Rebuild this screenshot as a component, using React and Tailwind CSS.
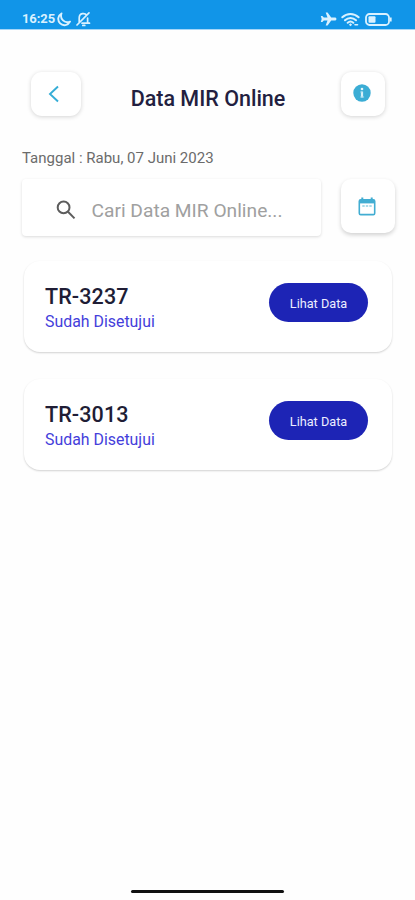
import React from "react";

const records = [
  { id: "TR-3237", status: "Sudah Disetujui" },
  { id: "TR-3013", status: "Sudah Disetujui" },
];

function StatusBar() {
  return (
    <header className="flex h-[30px] items-start justify-between border-b border-[#a5d6f8] bg-[#1195e8] pr-[23px] pl-[22px] text-[#d9f1ff]">
      <div className="flex h-[29px] items-center pt-[9px]">
        <span className="w-[34px] text-[13px] leading-4 font-bold tracking-[-0.1px] whitespace-nowrap">16:25</span>
        <svg className="h-[15px] w-[15px]" viewBox="0 0 15 15" fill="none" stroke="currentColor" strokeWidth="1.9" strokeLinejoin="round">
          <path d="M5.5 1.5A6.2 6.2 0 1 0 14 9.7 6.4 6.4 0 0 1 5.5 1.5Z" />
        </svg>
        <svg className="ml-[5px] h-[16px] w-[15px]" viewBox="0 0 15 16" fill="none" stroke="currentColor" strokeWidth="1.7" strokeLinecap="round">
          <path d="M3.2 11V7c0-5.6 6-5 7.3-3M11.6 7v5M6 12.2h7.5M6.8 14.4h2M1 14 13 1.8" />
        </svg>
      </div>
      <div className="flex h-[29px] items-center pt-[9px]">
        <svg className="h-[16px] w-[17px]" viewBox="0 0 17 16" fill="currentColor">
          <path d="M16.5 8c0-.9-.8-1.5-1.6-1.5h-3.7L7.6 1.5H5.7l1.8 5H3.8L2.4 4.9H.8L1.7 8 .8 11.1h1.6l1.4-1.6h3.7l-1.8 5h1.9l3.6-5h3.7c.8 0 1.6-.6 1.6-1.5Z" />
        </svg>
        <svg className="ml-[4px] h-[15px] w-[19px]" viewBox="0 0 19 15" fill="none" stroke="currentColor" strokeWidth="2" strokeLinecap="round">
          <path d="M1.3 5.3c4.7-4.4 11.6-4.4 16.3 0M4 8.2c3.2-3 7.8-3 11 0M6.7 10.8c1.6-1.4 4-1.4 5.6 0" />
          <path d="m9.5 11.2 1.6 1.6-1.6 1.5-1.6-1.5Z" fill="currentColor" stroke="none" />
          <path d="M14 12.8h2.5" strokeWidth="1.6" />
        </svg>
        <svg className="ml-[5px] h-[13px] w-[27px]" viewBox="0 0 27 13">
          <rect x="1" y="1" width="23" height="11" rx="3.5" fill="none" stroke="currentColor" strokeWidth="1.8" />
          <rect x="3.5" y="3.3" width="7" height="6.4" rx="1" fill="currentColor" />
          <path d="M25.8 4.5v4" stroke="currentColor" strokeWidth="1.7" />
        </svg>
      </div>
    </header>
  );
}

function RecordCard({ id, status }) {
  return (
    <article className="flex h-[91px] items-start justify-between rounded-[16px] bg-white pt-[22px] pr-[24px] pl-[21px] shadow-[0_1px_2px_rgba(0,0,0,0.18)]">
      <div className="pt-[1px]">
        <h2 className="text-[21.5px] leading-[25px] font-medium tracking-[0.1px] whitespace-nowrap text-[#201d35]">{id}</h2>
        <p className="text-[15.9px] leading-[26px] whitespace-nowrap text-[#453edb]">{status}</p>
      </div>
      <button className="h-[39px] w-[99px] rounded-full bg-[#1d24b5] pt-[2px] text-[12.7px] whitespace-nowrap text-[#eceeff]">
        Lihat Data
      </button>
    </article>
  );
}

export default function App() {
  return (
    <div className="flex h-[900px] w-[415px] flex-col overflow-hidden bg-[#fefefe] font-['Roboto',sans-serif]">
      <StatusBar />
      <main className="flex-1">
        <div className="mt-[41px] flex h-[45px] items-center justify-between pr-[30px] pl-[31px]">
          <button className="flex h-[44px] w-[50px] items-center rounded-[11px] bg-white pl-[17px] shadow-[0_1px_4px_rgba(0,0,0,0.17)]" aria-label="Kembali">
            <svg className="h-[18px] w-[12px]" viewBox="0 0 12 18" fill="none" stroke="#35add6" strokeWidth="1.9">
              <path d="M10 1.5 2 9l8 7.5" />
            </svg>
          </button>
          <h1 className="pt-[10px] pr-[6px] text-[21.5px] leading-6 font-medium whitespace-nowrap text-[#231f40]">Data MIR Online</h1>
          <button className="flex h-[44px] w-[44px] items-center justify-center rounded-[10px] bg-white pr-[2px] pb-[1px] shadow-[0_1px_4px_rgba(0,0,0,0.17)]" aria-label="Info">
            <svg className="h-[18px] w-[18px]" viewBox="0 0 18 18">
              <circle cx="9" cy="9" r="8.7" fill="#3badd5" />
              <path d="M9 7.5v6" fill="none" stroke="#d7f0f8" strokeWidth="2.2" />
              <path d="M7.3 8h2M7.3 13h3.8" fill="none" stroke="#a9dcee" strokeWidth="1.1" />
              <circle cx="9" cy="5" r="1.3" fill="#e4f6fb" />
            </svg>
          </button>
        </div>

        <p className="mt-[33px] pl-[22px] text-[15px] leading-[18px] whitespace-nowrap text-[#6b6b6b]">Tanggal : Rabu, 07 Juni 2023</p>

        <div className="mt-[12px] flex items-start justify-between pr-[20px] pl-[22px]">
          <label className="flex h-[57px] w-[299px] items-center rounded-[4px] bg-white pt-[5px] pl-[34px] shadow-[0_1px_3px_rgba(0,0,0,0.14)]">
            <svg className="h-[20px] w-[20px] shrink-0" viewBox="0 0 20 20" fill="none" stroke="#5c5c5c" strokeWidth="2">
              <circle cx="7.6" cy="7.4" r="5.9" />
              <path d="m12 11.8 6.5 6.6" />
            </svg>
            <span className="ml-[15.5px] pt-[1px] text-[19.2px] leading-6 whitespace-nowrap text-[#a0a0a0]">Cari Data MIR Online...</span>
          </label>
          <button className="flex h-[54px] w-[54px] items-center justify-center rounded-[10px] bg-white pr-[2px] shadow-[0_2px_4px_rgba(0,0,0,0.18)]" aria-label="Pilih tanggal">
            <svg className="h-[19px] w-[18px]" viewBox="0 0 18 19" fill="none" stroke="#42add2" strokeWidth="1.6">
              <rect x="1.3" y="2.8" width="15.4" height="14.8" rx="1.4" />
              <path d="M1.5 4.7h15" strokeWidth="3.4" />
              <path d="M4.3 2.8V.5M13.7 2.8V.5" strokeWidth="2" />
              <path d="M4.3 9h2.4M7.8 9h2.4M11.3 9h2.4" strokeWidth="2" stroke="#abdcea" />
            </svg>
          </button>
        </div>

        <section className="mt-[25px] flex flex-col gap-[27px] pr-[23px] pl-[24px]">
          {records.map((record) => (
            <RecordCard key={record.id} {...record} />
          ))}
        </section>
      </main>
      <div className="mb-[7px] h-[3px] w-[153px] self-center rounded-full bg-[#111]" />
    </div>
  );
}
